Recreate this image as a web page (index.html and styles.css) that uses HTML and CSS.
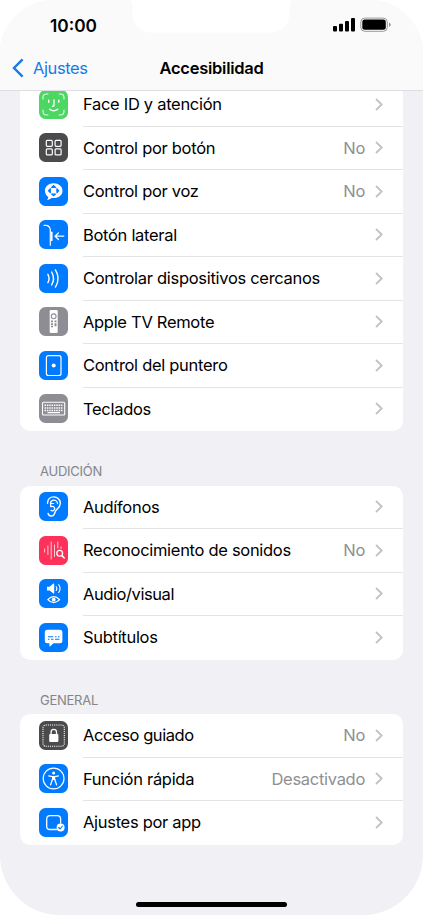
FILE: index.html
```html
<!DOCTYPE html>
<html lang="es">
<head>
  <meta charset="UTF-8">
  <meta name="viewport" content="width=device-width, initial-scale=1.0">
  <title>Accesibilidad</title>
  <link rel="stylesheet" href="styles.css">
</head>
<body>

  <!-- Shared shapes -->
  <svg class="defs" width="0" height="0">
    <symbol id="chevron" viewBox="0 0 8 13">
      <path d="M1 1l5.7 5.5L1 12" fill="none" stroke="currentColor" stroke-width="1.8"/>
    </symbol>
  </svg>

  <div class="phone">
    <header class="header">
      <div class="status-bar">
        <span class="time">10:00</span>
        <svg class="notch" width="166" height="33" viewBox="0 0 166 33">
          <path d="M0 0C3 0 4.500 2 4.500 5V12C4.500 25 12 32.500 25 32.500H141C154 32.500 161.500 25 161.500 12V5C161.500 2 163 0 166 0Z" fill="#fff"/>
        </svg>
        <svg class="status-icons" width="60" height="16" viewBox="0 0 60 16">
          <rect x="1" y="9" width="4" height="5.500" rx="1"/>
          <rect x="7" y="6.700" width="4" height="7.800" rx="1"/>
          <rect x="13" y="4" width="4" height="10.500" rx="1"/>
          <rect x="19" y="1" width="4" height="13.500" rx="1"/>
          <rect x="28.800" y="1.100" width="26.500" height="13.200" rx="4" fill="none" stroke="#999" stroke-width="1"/>
          <rect x="30.300" y="2.600" width="23.500" height="10.200" rx="2.500"/>
          <path d="M57 5.800c2.300.7 2.300 3.300 0 4z" fill="#999"/>
        </svg>
      </div>
      <nav class="nav-bar">
        <a class="back" href="#">
          <svg width="12" height="20" viewBox="0 0 12 20"><path d="M10.600 1.300L2 10l8.600 8.700" fill="none" stroke="currentColor" stroke-width="2.400"/></svg>
          <span>Ajustes</span>
        </a>
        <h1>Accesibilidad</h1>
      </nav>
    </header>

    <main class="content">
      <ul class="group">
        <li class="row">
          <svg class="icon green" viewBox="0 0 29 29">
            <path d="M4 9V7.500Q4 4 7.500 4H9M20 4h1.500Q25 4 25 7.500V9M25 20v1.500Q25 25 21.500 25H20M9 25H7.500Q4 25 4 21.500V20" stroke-width="1.100" opacity=".85"/>
            <path d="M9.700 10.200v2.100M19.800 10.200v2.100M15 10v5.200q0 1.100-1.500 1M10.700 19.300q4 3.200 8 0" stroke-width="1.400"/>
          </svg>
          <div class="cell"><span class="label">Face ID y atención</span><svg class="chevron"><use href="#chevron"/></svg></div>
        </li>
        <li class="row">
          <svg class="icon dark" viewBox="0 0 29 29">
            <g stroke-width="1.200">
              <rect x="7.300" y="7.300" width="6" height="6" rx="1"/>
              <rect x="16.100" y="7.300" width="6" height="6" rx="1"/>
              <rect x="7.300" y="15.900" width="6" height="6" rx="1"/>
              <rect x="16.100" y="15.900" width="6" height="6" rx="1"/>
            </g>
          </svg>
          <div class="cell"><span class="label">Control por botón</span><span class="value">No</span><svg class="chevron"><use href="#chevron"/></svg></div>
        </li>
        <li class="row">
          <svg class="icon blue" viewBox="0 0 29 29">
            <path class="solid" d="M14.700 6.300c5.100 0 8.800 3.200 8.800 7.400s-3.700 7.400-8.800 7.400h-2.200c-1 1.100-2.800 1.800-4.600 1.900 1-1 1.400-2 1.300-3.100-2-1.500-3.300-3.600-3.300-6.200 0-4.200 3.700-7.400 8.800-7.400z"/>
            <path class="ink-fill" d="M14.600 7.800l2.700 2.500-.6.700h-4.200l-.6-.7zM14.600 19.600l2.700-2.500-.6-.7h-4.200l-.6.700zM8.700 13.700l2.500-2.700.7.600v4.200l-.7.600zM20.500 13.700L18 11l-.7.600v4.200l.7.600z"/>
          </svg>
          <div class="cell"><span class="label">Control por voz</span><span class="value">No</span><svg class="chevron"><use href="#chevron"/></svg></div>
        </li>
        <li class="row">
          <svg class="icon blue" viewBox="0 0 29 29">
            <path d="M5 5.300h1.500c3.200 0 4.800 2 4.800 5.200v14.700" stroke-width="1.200"/>
            <path d="M12.800 12.200v8.300" stroke-width="1.500"/>
            <path d="M24.700 16.200h-8.500M19.500 12.900l-3.400 3.300 3.400 3.300" stroke-width="1.300"/>
          </svg>
          <div class="cell"><span class="label">Botón lateral</span><svg class="chevron"><use href="#chevron"/></svg></div>
        </li>
        <li class="row">
          <svg class="icon blue" viewBox="0 0 29 29">
            <path d="M8.900 10.300q2.300 4.200 0 8.400M12.600 8q3.900 6.500 0 13M16.400 5.900q5.400 8.600 0 17.200" stroke-width="1.400"/>
          </svg>
          <div class="cell"><span class="label">Controlar dispositivos cercanos</span><svg class="chevron"><use href="#chevron"/></svg></div>
        </li>
        <li class="row">
          <svg class="icon gray" viewBox="0 0 29 29">
            <rect class="solid" x="10.700" y="3" width="8" height="23" rx="1.200"/>
            <circle class="ink" cx="14.700" cy="9.300" r="2.400" stroke-width="1.100"/>
            <path class="ink-fill" d="M12 13.600h2v1.700h-2zM15.500 13.600h2v1.700h-2zM12 16.300h2V18h-2zM15.500 16.300h2v3h-2zM12 18.800h2v1.500h-2z"/>
          </svg>
          <div class="cell"><span class="label">Apple TV Remote</span><svg class="chevron"><use href="#chevron"/></svg></div>
        </li>
        <li class="row">
          <svg class="icon blue" viewBox="0 0 29 29">
            <rect x="7.400" y="4.700" width="14.600" height="19.800" rx="2" stroke-width="1.200"/>
            <circle class="solid" cx="14.700" cy="14.600" r="2"/>
          </svg>
          <div class="cell"><span class="label">Control del puntero</span><svg class="chevron"><use href="#chevron"/></svg></div>
        </li>
        <li class="row">
          <svg class="icon gray" viewBox="0 0 29 29">
            <rect x="3.500" y="8.300" width="22.200" height="12.700" rx="1" stroke-width="1.100"/>
            <path d="M5.500 11.300h18M5.500 14h18M5.500 16.500h18" stroke-width="1.400" stroke-dasharray="1.500 .85" stroke-linecap="butt"/>
            <path d="M9 18.700h11.500" stroke-width="1.200"/>
          </svg>
          <div class="cell"><span class="label">Teclados</span><svg class="chevron"><use href="#chevron"/></svg></div>
        </li>
      </ul>

      <h2>AUDICIÓN</h2>
      <ul class="group">
        <li class="row">
          <svg class="icon blue" viewBox="0 0 29 29">
            <path d="M8.500 11.200C8.600 7.300 11.200 4.900 14.700 4.900c3.700 0 6.600 2.700 6.600 6.300 0 3.100-1.600 4.600-3.300 6.100-2.200 1.900-1.900 3.200-2.700 4.900-1.100 2.500-5.300 2.600-6.200-.7" stroke-width="1.400"/>
            <path d="M11.400 11.400c.3-2 1.500-3.200 3.300-3.200 2.100 0 3.800 1.500 3.800 3.400M11.700 11.500h3M11.700 11.500v3.200c3.500-1.200 5.300 2 2.800 3.700-.9.600-1.800.5-2.500-.1" stroke-width="1.200"/>
          </svg>
          <div class="cell"><span class="label">Audífonos</span><svg class="chevron"><use href="#chevron"/></svg></div>
        </li>
        <li class="row">
          <svg class="icon red" viewBox="0 0 29 29">
            <path d="M5.600 13v3M8.900 10v8.500M12.200 6v17M15.500 9v11.500M18.800 6v6M22 11v1.500" stroke-width=".9" opacity=".85"/>
            <circle cx="20.700" cy="17.300" r="2.900" stroke-width="1.300"/>
            <path d="M22.900 19.600l2.400 2.400" stroke-width="1.500"/>
          </svg>
          <div class="cell"><span class="label">Reconocimiento de sonidos</span><span class="value">No</span><svg class="chevron"><use href="#chevron"/></svg></div>
        </li>
        <li class="row">
          <svg class="icon blue" viewBox="0 0 29 29">
            <path class="solid" d="M8 7.800h2.600l3.800-3.200q.8-.4.800.5v9q0 .9-.8.500l-3.800-3.200H8z"/>
            <path d="M17.200 7.700q1.300 1.800 0 3.800M19.700 5.700q2.700 3.800 0 7.800" stroke-width="1.100"/>
            <path d="M8.800 20.600q5.900-6 11.800 0-5.900 6-11.800 0z" stroke-width="1.300"/>
            <circle class="solid" cx="14.700" cy="20.600" r="1.900"/>
          </svg>
          <div class="cell"><span class="label tight">Audio/visual</span><svg class="chevron"><use href="#chevron"/></svg></div>
        </li>
        <li class="row">
          <svg class="icon blue" viewBox="0 0 29 29">
            <path class="solid" d="M8.300 6.700h12.600q2.500 0 2.500 2.500v8.500q0 2.500-2.500 2.500H14.500l-3.200 3q-.9.700-.9-.4v-2.600H8.300q-2.500 0-2.500-2.500V9.200q0-2.500 2.500-2.500z"/>
            <path class="ink" d="M9 13.700h5.300M16 13.700h1.500M19 13.700h1.500M9 16.200h1.500M12 16.200h2.500M16 16.200h4.500" stroke-width="1.100" stroke-linecap="butt"/>
          </svg>
          <div class="cell"><span class="label">Subtítulos</span><svg class="chevron"><use href="#chevron"/></svg></div>
        </li>
      </ul>

      <h2>GENERAL</h2>
      <ul class="group">
        <li class="row">
          <svg class="icon dark" viewBox="0 0 29 29">
            <rect x="4" y="4" width="21.300" height="21.300" rx="2.800" stroke-width="1.100" stroke-dasharray="1.100 1" stroke-linecap="butt"/>
            <rect class="solid" x="10.200" y="13" width="9.200" height="8" rx="1"/>
            <path d="M12.100 13.500v-2.400c0-3.600 5.400-3.600 5.400 0v2.400" stroke-width="1.300"/>
          </svg>
          <div class="cell"><span class="label tight">Acceso guiado</span><span class="value">No</span><svg class="chevron"><use href="#chevron"/></svg></div>
        </li>
        <li class="row">
          <svg class="icon blue" viewBox="0 0 29 29">
            <circle cx="14.600" cy="14.500" r="10.400" stroke-width="1.200"/>
            <circle class="solid" cx="14.600" cy="9" r="1.500"/>
            <path d="M9.700 11.800l3.600.8h2.600l3.600-.8" stroke-width="1.300"/>
            <path class="solid" d="M13 12.200h3.200v3.700h-3.200z"/>
            <path d="M13.400 15.500l-1.800 5.400M15.800 15.500l1.800 5.400" stroke-width="1.300"/>
          </svg>
          <div class="cell"><span class="label">Función rápida</span><span class="value">Desactivado</span><svg class="chevron"><use href="#chevron"/></svg></div>
        </li>
        <li class="row">
          <svg class="icon blue" viewBox="0 0 29 29">
            <path d="M17.500 21.500H11q-3.300 0-3.300-3.300V11q0-3.300 3.300-3.300h7.300q3.300 0 3.300 3.300v4" stroke-width="1.300"/>
            <circle class="solid" cx="21.600" cy="19.400" r="4"/>
            <path class="ink" d="M19.700 19.500l1.400 1.500 2.400-3" stroke-width="1.100"/>
          </svg>
          <div class="cell"><span class="label">Ajustes por app</span><svg class="chevron"><use href="#chevron"/></svg></div>
        </li>
      </ul>
    </main>

    <div class="home-indicator"></div>
  </div>

</body>
</html>
```
FILE: styles.css
```css
* {
  box-sizing: border-box;
}

body {
  margin: 0;
  background-color: #fff;
  color: #000;
  font-family: Inter, "Liberation Sans", sans-serif;
}

.defs {
  position: absolute;
}

.phone {
  display: flex;
  flex-direction: column;
  width: 423px;
  height: 915px;
  overflow: hidden;
  background-color: #f0f0f5;
  border-radius: 54px 54px 60px 60px;
}

.header {
  position: relative;
  z-index: 1;
  height: 91px;
  flex: none;
  background-color: #fafafa;
  border-bottom: 1px solid #dedee2;
}

.status-bar {
  display: flex;
  height: 46px;
  padding: 0 31px 0 50px;
}

.time {
  width: 78px;
  padding-top: 15px;
  font-size: 17.3px;
  line-height: 21px;
  font-weight: 600;
}

.notch {
  flex: none;
}

.status-icons {
  margin: 17px 0 0 auto;
}

.nav-bar {
  display: grid;
  grid-template-columns: 1fr auto 1fr;
  align-items: center;
  height: 44px;
  padding: 0 12px;
}

.back {
  display: flex;
  align-items: center;
  gap: 9px;
  color: #167be8;
  font-size: 16.5px;
  letter-spacing: -0.4px;
  text-decoration: none;
}

h1 {
  margin: 0;
  font-size: 16.5px;
  font-weight: 600;
  letter-spacing: -0.25px;
}

.content {
  padding: 0 20px;
  margin-top: -8px;
}

.group {
  margin: 0;
  padding: 0;
  list-style: none;
  background-color: #fff;
  border-radius: 10px;
}

.row {
  display: flex;
  align-items: center;
  height: 43.5px;
  padding-left: 19.4px;
}

.icon {
  flex: none;
  width: 29px;
  height: 29px;
  margin: 0 14.6px 0.6px 0;
  border-radius: 6.5px;
  fill: none;
  stroke: #fff;
  stroke-linecap: round;
  stroke-linejoin: round;
}

.green { background-color: #4cd662; color: #4cd662; }
.dark { background-color: #4b4a4c; color: #4b4a4c; }
.blue { background-color: #007aff; color: #007aff; }
.gray { background-color: #8e8d93; color: #8e8d93; }
.red { background-color: #fd3159; color: #fd3159; }

.solid {
  fill: #fff;
  stroke: none;
}

.ink {
  stroke: currentColor;
}

.ink-fill {
  fill: currentColor;
  stroke: none;
}

.cell {
  display: flex;
  flex: 1;
  align-items: center;
  height: 100%;
  padding-right: 20px;
  border-bottom: 1px solid #e3e3e6;
}

.row:last-child .cell {
  border-bottom-color: transparent;
}

.label {
  flex: 1;
  font-size: 16.5px;
  letter-spacing: -0.3px;
}

.tight {
  letter-spacing: -0.42px;
}

.value {
  color: #8f8f93;
  font-size: 16.5px;
  letter-spacing: -0.3px;
}

.chevron {
  width: 8px;
  height: 13px;
  margin-left: 10px;
  color: #c2c2c6;
}

h2 {
  margin: 0;
  height: 54.5px;
  padding: 32px 20px 0;
  color: #858589;
  font-size: 13px;
  line-height: 16px;
  font-weight: 400;
  letter-spacing: -0.25px;
}

.home-indicator {
  width: 151px;
  height: 5px;
  margin: auto auto 8px;
  flex: none;
  border-radius: 3px;
  background-color: #000;
}
```
